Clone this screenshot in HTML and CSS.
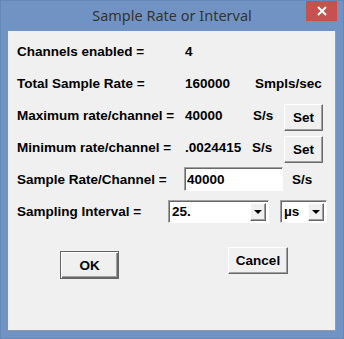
FILE: index.html
```html
<!DOCTYPE html>
<html lang="en">

<head>
  <meta charset="UTF-8">
  <meta name="viewport" content="width=device-width, initial-scale=1.0">
  <title>Sample Rate or Interval</title>
  <link rel="stylesheet" href="styles.css">
</head>

<body>
  <div class="window">
    <div class="titlebar">
      <span class="title">Sample Rate or Interval</span>
      <button class="close" aria-label="Close">
        <svg width="10" height="10" viewBox="0 0 10 10">
          <path d="M1 1 L9 9 M9 1 L1 9" stroke="#fff" stroke-width="2" fill="none" />
        </svg>
      </button>
    </div>

    <div class="client">
      <div class="row">
        <span class="label">Channels enabled =</span>
        <span class="value">4</span>
      </div>
      <div class="row">
        <span class="label">Total Sample Rate =</span>
        <span class="value value-wide">160000</span>
        <span class="unit">Smpls/sec</span>
      </div>
      <div class="row">
        <span class="label">Maximum rate/channel =</span>
        <span class="value">40000</span>
        <span class="unit unit-short">S/s</span>
        <button class="btn btn-set">Set</button>
      </div>
      <div class="row">
        <span class="label">Minimum rate/channel =</span>
        <span class="value value-narrow">.0024415</span>
        <span class="unit unit-set">S/s</span>
        <button class="btn btn-set">Set</button>
      </div>
      <div class="row">
        <span class="label label-input">Sample Rate/Channel =</span>
        <input type="text" class="field" value="40000">
        <span class="unit unit-field">S/s</span>
      </div>
      <div class="row">
        <span class="label label-combo">Sampling Interval =</span>
        <div class="combo combo-interval">
          <span class="combo-text">25.</span>
          <span class="combo-arrow"></span>
        </div>
        <div class="combo combo-unit">
          <span class="combo-text">µs</span>
          <span class="combo-arrow"></span>
        </div>
      </div>

      <div class="actions">
        <button class="btn btn-ok">OK</button>
        <button class="btn btn-cancel">Cancel</button>
      </div>
    </div>
  </div>
</body>

</html>
```

FILE: styles.css
```css
body {
  margin: 0;
  background-color: #7193c3;
  font-family: 'Liberation Sans', Arial, sans-serif;
}

.window {
  width: 344px;
  height: 339px;
  box-sizing: border-box;
  border: 1px solid #6688b9;
  overflow: hidden;
}

.titlebar {
  display: grid;
  grid-template-columns: 1fr auto 1fr;
  height: 30px;
}

.title {
  grid-column: 2;
  align-self: center;
  margin-top: -2px;
  font-family: 'Noto Sans', 'Open Sans', sans-serif;
  font-size: 14.5px;
  color: #333333;
  white-space: nowrap;
}

.close {
  grid-column: 3;
  justify-self: end;
  align-self: start;
  width: 31px;
  height: 20px;
  margin-right: 6px;
  padding: 0;
  border: none;
  background-color: #c75050;
  display: flex;
  justify-content: center;
  align-items: center;
}

.client {
  margin: 0 7px;
  height: 300px;
  box-sizing: border-box;
  padding: 4px 0 0 9px;
  background-color: #f0f0f0;
  border-right: 1px solid #8c9bb2;
  border-bottom: 1px solid #8c9bb2;
}

.row {
  display: flex;
  align-items: center;
  height: 32px;
  font-size: 13.5px;
  font-weight: bold;
  color: #000;
  white-space: nowrap;
}

.label {
  width: 168px;
  flex: none;
}

.label-input {
  width: 167px;
}

.label-combo {
  width: 151px;
}

.value {
  width: 68px;
  flex: none;
}

.value-wide {
  width: 70px;
}

.value-narrow {
  width: 67px;
}

.unit-short {
  width: 31px;
}

.unit-set {
  width: 32px;
}

.unit-field {
  margin-left: 9px;
}

.btn {
  font-family: 'Liberation Sans', Arial, sans-serif;
  font-size: 13.5px;
  font-weight: bold;
  color: #000;
  background-color: #f0f0f0;
  border: 1px solid;
  border-color: #ffffff #696969 #696969 #ffffff;
  box-shadow: inset -1px -1px #a0a0a0;
  padding: 0;
  box-sizing: border-box;
}

.btn-set {
  width: 39px;
  height: 27px;
  margin-top: 5px;
}

.field {
  width: 99px;
  height: 24px;
  box-sizing: border-box;
  border: 1px solid;
  border-color: #a0a0a0 #ffffff #ffffff #a0a0a0;
  box-shadow: inset 1px 1px #696969;
  padding: 0 0 0 2px;
  background-color: #fff;
  font-family: 'Liberation Sans', Arial, sans-serif;
  font-size: 13.5px;
  font-weight: bold;
  color: #000;
  outline: none;
}

.combo {
  display: flex;
  height: 23px;
  box-sizing: border-box;
  border: 1px solid;
  border-color: #a0a0a0 #ffffff #ffffff #a0a0a0;
  box-shadow: inset 1px 1px #696969;
  padding: 2px 2px 1px 2px;
  background-color: #fff;
}

.combo-interval {
  width: 101px;
}

.combo-unit {
  width: 47px;
  margin-left: 11px;
}

.combo-text {
  flex: 1;
  line-height: 18px;
  padding-left: 1px;
}

.combo-arrow {
  width: 16px;
  flex: none;
  box-sizing: border-box;
  background-color: #f0f0f0;
  border: 1px solid;
  border-color: #ffffff #696969 #696969 #ffffff;
  box-shadow: inset -1px -1px #a0a0a0;
  display: flex;
  justify-content: center;
  align-items: center;
}

.combo-arrow::after {
  content: '';
  border-left: 4px solid transparent;
  border-right: 4px solid transparent;
  border-top: 4px solid #000;
  margin-top: 1px;
}

.actions {
  display: flex;
  align-items: flex-start;
  margin-top: 20px;
  padding-left: 43px;
}

.btn-ok {
  width: 59px;
  height: 28px;
  margin-top: 4px;
  border: 1px solid #646464;
  box-shadow: inset 1px 1px #ffffff, inset -1px -1px #696969, inset -2px -2px #a0a0a0;
}

.btn-cancel {
  width: 60px;
  height: 27px;
  margin-left: 109px;
}
```
